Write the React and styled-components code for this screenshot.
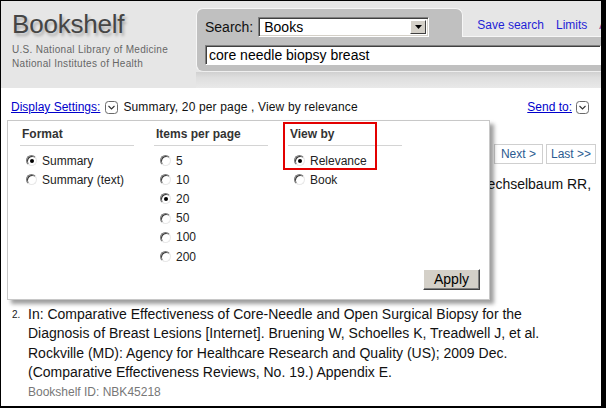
import React from "react";
import styled, { createGlobalStyle } from "styled-components";

const Global = createGlobalStyle`
  html, body {
    margin: 0;
    padding: 0;
    background: #fff;
    overflow: hidden;
  }
  body {
    font-family: "Liberation Sans", Arial, sans-serif;
  }
`;

const Frame = styled.div`
  position: relative;
  width: 606px;
  height: 408px;
  box-sizing: border-box;
  border-style: solid;
  border-color: #000;
  border-width: 1px 5px 2px 1px;
  background: #fff;
  overflow: hidden;
`;

/* ---------- header ---------- */

const Header = styled.div`
  display: flex;
  height: 87px;
  background: #e6e6e6;
  overflow: hidden;
`;

const Brand = styled.div`
  flex: 0 0 195px;
  padding: 10px 0 0 11px;
  box-sizing: border-box;
`;

const Logo = styled.div`
  font-size: 26px;
  line-height: 26px;
  letter-spacing: -0.2px;
  color: #454545;
  text-shadow: 2px 3px 3px rgba(0, 0, 0, 0.25);
`;

const Agency = styled.div`
  margin-top: 6px;
  font-size: 10px;
  line-height: 14px;
  letter-spacing: 0.3px;
  color: #666;
`;

const SearchArea = styled.div`
  flex: 1;
  display: flex;
  flex-direction: column;
  padding-top: 7px;
  min-width: 0;
`;

const TabRow = styled.div`
  display: flex;
  height: 29px;
`;

const Tab = styled.div`
  display: flex;
  align-items: flex-start;
  gap: 5px;
  padding: 8px 33px 0 8px;
  background: #c0c0c0;
  border: 1px solid #f6f6f6;
  border-bottom: 0;
  border-radius: 7px 7px 0 0;
`;

const Label = styled.span`
  font-size: 14px;
  line-height: 20px;
  color: #111;
`;

const SelectBox = styled.div`
  position: relative;
  width: 171px;
  height: 20px;
  box-sizing: border-box;
  background: #fff;
  border: 1px solid;
  border-color: #808080 #fff #fff #808080;
  box-shadow: inset 1px 1px 0 #404040, inset -1px -1px 0 #d4d0c8;
  font-size: 14px;
  line-height: 18px;
  padding-left: 5px;
  color: #000;
`;

const SelectButton = styled.span`
  position: absolute;
  top: 2px;
  right: 2px;
  width: 16px;
  height: 14px;
  box-sizing: border-box;
  display: flex;
  align-items: center;
  justify-content: center;
  background: #d4d0c8;
  border: 1px solid;
  border-color: #fff #404040 #404040 #fff;
`;

const TopLinks = styled.div`
  flex: 1;
  display: flex;
  gap: 12px;
  padding: 10px 0 0 14px;
  border-bottom: 1px solid #f6f6f6;
  white-space: nowrap;
  font-size: 12px;
  line-height: 14px;
`;

const TopLink = styled.a`
  color: ${({ $visited }) => ($visited ? "#7b2a8e" : "#1f1fd6")};
  text-decoration: none;
`;

const Bar = styled.div`
  display: flex;
  padding: 8px 0 6px 8px;
  background: #c0c0c0;
  border-left: 1px solid #f6f6f6;
  border-bottom: 1px solid #efefef;
  border-bottom-left-radius: 7px;
`;

const QueryInput = styled.input`
  width: calc(100% + 4px);
  height: 20px;
  box-sizing: border-box;
  margin: 0;
  padding: 0 3px;
  border: 1px solid;
  border-color: #808080 #fff #fff #808080;
  box-shadow: inset 1px 1px 0 #404040;
  background: #fff;
  font-family: "Liberation Sans", Arial, sans-serif;
  font-size: 14px;
  color: #000;
  outline: none;
`;

const Shade = styled.div`
  flex: 1;
  background: linear-gradient(#d0d0d0, #dedede 35%, #e9e9e9);
`;

/* ---------- main ---------- */

const Main = styled.div`
  position: relative;
  height: 318px;
`;

const SettingsBar = styled.div`
  display: flex;
  justify-content: space-between;
  align-items: center;
  padding: 11px 12px 0 10px;
  font-size: 12px;
  line-height: 16px;
  color: #111;
`;

const Group = styled.div`
  display: flex;
  align-items: center;
  gap: ${({ $gap }) => $gap || 5}px;
`;

const UnderLink = styled.a`
  color: #0000cc;
  text-decoration: underline;
`;

const Summary = styled.span`
  letter-spacing: 0.15px;
`;

const Pager = styled.div`
  display: flex;
  justify-content: flex-end;
  gap: 3px;
  margin-top: 29px;
  padding-right: 5px;
`;

const PageButton = styled.span`
  height: 20px;
  box-sizing: border-box;
  padding: 0 ${({ $pad }) => $pad}px;
  border: 1px solid #cfcfcf;
  font-size: 12px;
  line-height: 18px;
  color: #2b5b91;
`;

const Results = styled.div`
  margin-top: 11px;
`;

const Item = styled.div`
  display: flex;
  margin-bottom: 14px;
`;

const Num = styled.div`
  flex: 0 0 27px;
  box-sizing: border-box;
  padding-left: 11px;
  font-size: 10px;
  line-height: 19.5px;
  color: #222;
`;

const Body = styled.div`
  flex: 1;
  min-width: 0;
  padding-right: 31px;
`;

const Text = styled.div`
  font-size: 14px;
  line-height: 19.5px;
  color: #111;
  white-space: ${({ $nowrap }) => ($nowrap ? "nowrap" : "normal")};
`;

const Ident = styled.div`
  font-size: 12px;
  line-height: 18px;
  color: #777;
`;

/* ---------- display settings menu ---------- */

const Menu = styled.div`
  position: absolute;
  top: 32px;
  left: 6px;
  width: 483px;
  height: 180px;
  box-sizing: border-box;
  display: flex;
  flex-direction: column;
  padding-left: 12px;
  background: #fff;
  border: 1px solid #c8c8c8;
  box-shadow: 4px 4px 4px rgba(0, 0, 0, 0.38);
`;

const Columns = styled.div`
  display: flex;
  gap: 20px;
`;

const Column = styled.div`
  width: 114px;
`;

const Heading = styled.div`
  padding: 5px 0 3px 2px;
  border-bottom: 1px solid #d4d4d4;
  font-size: 12px;
  line-height: 16px;
  font-weight: bold;
  color: #333;
`;

const Options = styled.div`
  margin-top: 5px;
`;

const Option = styled.label`
  display: flex;
  align-items: center;
  gap: 5px;
  height: 19.2px;
  padding-left: 6px;
  font-size: 12px;
  color: #222;
`;

const Radio = styled.span`
  position: relative;
  width: 11px;
  height: 11px;
  box-sizing: border-box;
  border-radius: 50%;
  border: 1px solid;
  border-color: #7a7a7a #e8e8e8 #e8e8e8 #7a7a7a;
  box-shadow: inset 1px 1px 0 #3c3c3c;
  background: #fff;

  &::after {
    content: "";
    display: ${({ $on }) => ($on ? "block" : "none")};
    position: absolute;
    left: 3px;
    top: 3px;
    width: 4px;
    height: 4px;
    border-radius: 50%;
    background: #000;
  }
`;

const Highlight = styled.div`
  position: absolute;
  left: 275px;
  top: 1px;
  width: 94px;
  height: 48px;
  box-sizing: border-box;
  border: 2px solid #e30000;
`;

const ApplyButton = styled.span`
  align-self: flex-end;
  margin: auto 9px 9px 0;
  width: 57px;
  height: 21px;
  box-sizing: border-box;
  background: #d4d0c8;
  border: 1px solid;
  border-color: #fff #404040 #404040 #fff;
  box-shadow: inset -1px -1px 0 #808080;
  text-align: center;
  font-size: 14px;
  line-height: 19px;
  color: #000;
`;

function Chevron() {
  return (
    <svg width="13" height="13" viewBox="0 0 13 13">
      <rect x="0.5" y="0.5" width="12" height="12" rx="3" fill="#fff" stroke="#6a6a6a" />
      <polyline points="3.5,5 6.5,8 9.5,5" fill="none" stroke="#333" strokeWidth="1.1" />
    </svg>
  );
}

function RadioOption({ label, on }) {
  return (
    <Option>
      <Radio $on={on} />
      {label}
    </Option>
  );
}

const settings = [
  { title: "Format", options: ["Summary", "Summary (text)"], on: 0 },
  { title: "Items per page", options: ["5", "10", "20", "50", "100", "200"], on: 2 },
  { title: "View by", options: ["Relevance", "Book"], on: 0 },
];

export default function App() {
  return (
    <>
      <Global />
      <Frame>
        <Header>
          <Brand>
            <Logo>Bookshelf</Logo>
            <Agency>
              U.S. National Library of Medicine
              <br />
              National Institutes of Health
            </Agency>
          </Brand>
          <SearchArea>
            <TabRow>
              <Tab>
                <Label>Search:</Label>
                <SelectBox>
                  Books
                  <SelectButton>
                    <svg width="7" height="4" viewBox="0 0 7 4">
                      <polygon points="0,0 7,0 3.5,4" fill="#000" />
                    </svg>
                  </SelectButton>
                </SelectBox>
              </Tab>
              <TopLinks>
                <TopLink>Save search</TopLink>
                <TopLink>Limits</TopLink>
                <TopLink $visited>Advanced</TopLink>
              </TopLinks>
            </TabRow>
            <Bar>
              <QueryInput defaultValue="core needle biopsy breast" readOnly />
            </Bar>
            <Shade />
          </SearchArea>
        </Header>

        <Main>
          <SettingsBar>
            <Group $gap={5}>
              <UnderLink>Display Settings:</UnderLink>
              <Chevron />
              <Summary>Summary, 20 per page , View by relevance</Summary>
            </Group>
            <Group $gap={4}>
              <UnderLink>Send to:</UnderLink>
              <Chevron />
            </Group>
          </SettingsBar>

          <Pager>
            <PageButton $pad={6}>Next &gt;</PageButton>
            <PageButton $pad={4}>Last &gt;&gt;</PageButton>
          </Pager>

          <Results>
            <Item>
              <Num>1.</Num>
              <Body>
                <Text $nowrap>
                  Bruening WE, Schoelles KM, Treadwell JR, Launders J, Fontanarosa J, Wechselbaum RR,
                  <br />
                  Tipton K. Rockville (MD): Agency for Healthcare
                  <br />
                  Research and Quality (US); 2009 Dec.
                  <br />
                  (Comparative Effectiveness Reviews, No. 19.)
                  <br />
                  Report.
                </Text>
                <Ident>Bookshelf ID: NBK45220</Ident>
              </Body>
            </Item>
            <Item>
              <Num>2.</Num>
              <Body>
                <Text>
                  In: Comparative Effectiveness of Core-Needle and Open Surgical Biopsy for the
                  Diagnosis of Breast Lesions [Internet]. Bruening W, Schoelles K, Treadwell J, et al.
                  Rockville (MD): Agency for Healthcare Research and Quality (US); 2009 Dec.
                  (Comparative Effectiveness Reviews, No. 19.) Appendix E.
                </Text>
                <Ident>Bookshelf ID: NBK45218</Ident>
              </Body>
            </Item>
          </Results>

          <Menu>
            <Columns>
              {settings.map((col) => (
                <Column key={col.title}>
                  <Heading>{col.title}</Heading>
                  <Options>
                    {col.options.map((opt, i) => (
                      <RadioOption key={opt} label={opt} on={i === col.on} />
                    ))}
                  </Options>
                </Column>
              ))}
            </Columns>
            <ApplyButton>Apply</ApplyButton>
            <Highlight />
          </Menu>
        </Main>
      </Frame>
    </>
  );
}
